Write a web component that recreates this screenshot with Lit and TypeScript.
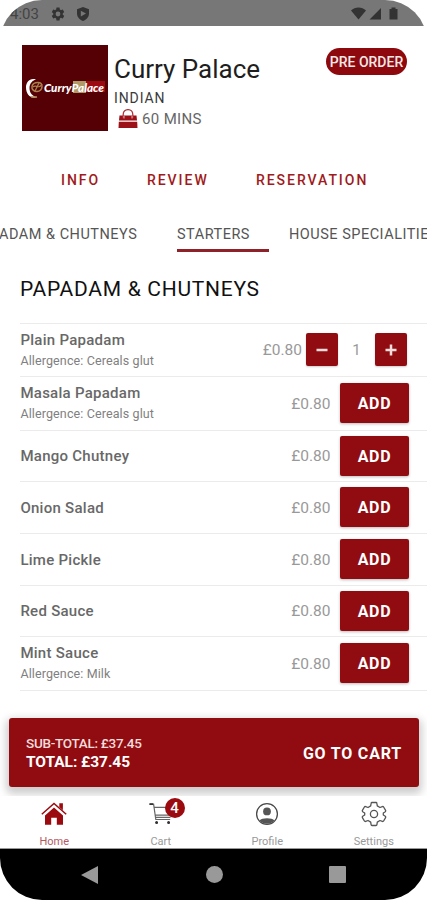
import { LitElement, html, svg, css, nothing } from "lit";
import { customElement, state } from "lit/decorators.js";
import { classMap } from "lit/directives/class-map.js";

interface Dish {
  name: string;
  note?: string;
  price: string;
  qty?: number;
  size: string;
}

const DISHES: Dish[] = [
  { name: "Plain Papadam", note: "Allergence: Cereals glut", price: "£0.80", qty: 1, size: "r53" },
  { name: "Masala Papadam", note: "Allergence: Cereals glut", price: "£0.80", size: "r54" },
  { name: "Mango Chutney", price: "£0.80", size: "r51" },
  { name: "Onion Salad", price: "£0.80", size: "r52" },
  { name: "Lime Pickle", price: "£0.80", size: "r52" },
  { name: "Red Sauce", price: "£0.80", size: "r51" },
  { name: "Mint Sauce", note: "Allergence: Milk", price: "£0.80", size: "r54" },
];

const GEAR =
  "M19.14 12.94c.04-.3.06-.61.06-.94 0-.32-.02-.64-.07-.94l2.03-1.58a.49.49 0 0 0 .12-.61l-1.92-3.32a.49.49 0 0 0-.59-.22l-2.39.96a7 7 0 0 0-1.62-.94l-.36-2.54a.48.48 0 0 0-.48-.41h-3.84a.48.48 0 0 0-.47.41l-.36 2.54c-.59.24-1.13.57-1.62.94l-2.39-.96a.48.48 0 0 0-.59.22L2.74 8.87a.48.48 0 0 0 .12.61l2.03 1.58c-.05.3-.09.63-.09.94s.02.64.07.94l-2.03 1.58a.49.49 0 0 0-.12.61l1.92 3.32c.12.22.37.29.59.22l2.39-.96c.5.38 1.03.7 1.62.94l.36 2.54c.05.24.24.41.48.41h3.84c.24 0 .44-.17.47-.41l.36-2.54a6.9 6.9 0 0 0 1.62-.94l2.39.96c.22.08.47 0 .59-.22l1.92-3.32a.48.48 0 0 0-.12-.61zM12 15.6A3.6 3.6 0 1 1 12 8.4a3.6 3.6 0 0 1 0 7.2z";

const NAV = [
  {
    label: "Home",
    icon: svg`<svg width="28" height="26" viewBox="0 0 28 26">
      <path d="M14 6.500 23 14.500v9.300h-6.200v-7h-5.600v7H5v-9.300z" fill="#9b0a0f"/>
      <path d="M1.800 13.200 14 2.500 26.200 13.200" fill="none" stroke="#9b0a0f" stroke-width="1.500"/>
      <path d="M19.300 2.200h3.600v7l-3.600-3.200z" fill="#9b0a0f"/>
    </svg>`,
  },
  {
    label: "Cart",
    icon: svg`<svg width="28" height="26" viewBox="0 0 28 26" fill="none" stroke="#666" stroke-width="1.2">
      <path d="M2.500 3.200h4.100l2.200 15.300h14.400M7.100 6.400h17v7.800H8.300M8.600 16.300H23.500"/>
      <path d="M2.500 3.200h3.600" stroke="#333" stroke-width="1.800"/>
      <circle cx="9.600" cy="21.600" r=".900" fill="#333" stroke="#333"/><circle cx="21.600" cy="21.600" r=".900" fill="#333" stroke="#333"/>
    </svg>`,
  },
  {
    label: "Profile",
    icon: svg`<svg width="28" height="26" viewBox="0 0 28 26">
      <circle cx="14" cy="13" r="10.400" fill="none" stroke="#4a4a4a" stroke-width="1.300"/>
      <circle cx="14" cy="10.400" r="3.900" fill="#555"/>
      <path d="M6.600 19.400c2-3 12.800-3 14.800 0A10 10 0 0 1 6.600 19.400z" fill="#555"/>
    </svg>`,
  },
  {
    label: "Settings",
    icon: svg`<svg width="28" height="26" viewBox="0 0 28 26" fill="none" stroke="#555" stroke-width="1.300" stroke-linejoin="round">
      <path d="M12 1.500h4q.8 0 .9.900l.4 2.500 2.700 1.600 2.300-.9q.9-.3 1.300.4l2 3.400q.4.700-.3 1.300L23.300 12v2l2 1.300q.7.600.3 1.300l-2 3.400q-.4.700-1.300.4l-2.300-.9-2.700 1.600-.4 2.500q-.1.900-.9.900h-4q-.8 0-.9-.9l-.4-2.500L8 19.500l-2.300.9q-.9.300-1.300-.4l-2-3.400q-.4-.7.300-1.300l2-1.300v-2l-2-1.300q-.7-.6-.3-1.300l2-3.400q.4-.7 1.300-.4l2.300.9 2.700-1.600.4-2.500q.1-.9.900-.9z"/>
      <circle cx="14" cy="13" r="3.600"/>
    </svg>`,
  },
];

@customElement("app-root")
class AppRoot extends LitElement {
  @state() private active = "Home";

  static styles = css`
    :host { display: block; width: 427px; height: 900px; background: #fff; font-family: Roboto, "Open Sans", sans-serif; color: #1e1e1e; }
    * { box-sizing: border-box; }
    svg { display: block; flex: none; }
    .phone { width: 427px; height: 900px; display: flex; flex-direction: column; border-radius: 42px; overflow: hidden; white-space: nowrap; }
    .status { height: 26px; flex: none; background: #777; display: flex; align-items: center; padding: 1px 28px 0 10px; color: #444; }
    .time { font-size: 15px; width: 40px; }
    .status .gap { flex: 1; }
    .status .s1 { margin-right: 10px; }
    .header { display: flex; height: 124px; padding: 19px 20px 0 22px; flex: none; }
    .logo { width: 86px; height: 86px; background: #550004; }
    .info { padding: 8px 0 0 6px; flex: 1; }
    .title { font-size: 26px; line-height: 32px; font-weight: 400; }
    .kind { font-size: 14px; line-height: 18px; margin-top: 4px; color: #3a3a3a; letter-spacing: .9px; }
    .mins { display: flex; align-items: center; font-size: 15px; line-height: 22px; color: #666; gap: 4px; padding-left: 4px; margin-top: 1px; letter-spacing: .35px; }
    .pre { height: 27px; width: 81px; margin-top: 3px; border-radius: 14px; background: #8d090e; color: #f7e8e8; font-size: 14px; line-height: 28px; text-align: center; font-weight: 500; }
    .links { display: flex; height: 58px; align-items: center; padding: 1px 0 0 61px; color: #a01a20; font-size: 14px; font-weight: 500; letter-spacing: 1.950px; flex: none; }
    .links .l1 { width: 86px; } .links .l2 { width: 109px; }
    .tabs { height: 48px; display: flex; flex: none; font-size: 14.500px; letter-spacing: .5px; color: #555; align-items: flex-start; overflow: hidden; }
    .tab { height: 44px; line-height: 53px; flex: none; }
    .t0 { width: 178px; margin-left: -1px; }
    .t1 { width: 92px; border-bottom: 3px solid #8f2228; margin-right: 20px; }
    .section { height: 67px; flex: none; padding-left: 20px; font-size: 21px; line-height: 67px; letter-spacing: .72px; color: #111; }
    .list { padding-left: 20px; flex: none; }
    .row { display: flex; align-items: center; border-top: 1px solid #ebebeb; }
    .row:last-child { border-bottom: 1px solid #ebebeb; height: 55px; }
    .r51 { height: 51px; } .r52 { height: 52px; } .r53 { height: 53px; } .r54 { height: 54px; }
    .words { flex: 1; padding-left: .4px; }
    .noted { padding-bottom: 1px; }
    .name { font-size: 15px; line-height: 20px; font-weight: 500; color: #686868; letter-spacing: .27px; }
    .note { font-size: 12.500px; line-height: 18px; margin-top: 2px; color: #808080; letter-spacing: .12px; }
    .price { font-size: 15.500px; color: #999; }
    .add { width: 69px; height: 40px; margin: -1px 18.500px 0 9px; background: #900c11; border-radius: 2px; color: #fff; font-size: 16px; font-weight: 700; letter-spacing: .7px; line-height: 41px; padding-left: 1px; text-align: center; box-shadow: 0 1px 3px #0004; }
    .step { width: 32px; height: 33px; background: #900c11; border-radius: 2px; display: grid; place-items: center; box-shadow: 0 1px 2px #0003; margin-top: -1px; }
    .minus { margin-left: 4px; }
    .plus { margin-right: 20px; }
    .qty { width: 37px; text-align: center; color: #999; font-size: 15px; }
    .spacer { height: 105px; flex: none; padding: 27px 8px 0 9px; }
    .cart { height: 69px; background: #900c11; border-radius: 3px; display: flex; align-items: center; justify-content: space-between; padding: 0 17px 0 17px; color: #fff; box-shadow: 0 4px 8px 3px #0003; }
    .sub { font-size: 13.500px; line-height: 19px; font-weight: 500; color: #f6dcdc; letter-spacing: -.28px; }
    .total { font-size: 15.500px; line-height: 19px; font-weight: 700; letter-spacing: -.05px; }
    .go { font-size: 16px; font-weight: 700; letter-spacing: .8px; padding-top: 1px; }
    .nav { height: 53px; flex: none; display: flex; position: relative; background: #fff; border-bottom: 1px solid #999; padding-left: 1px; }
    .item { flex: 1; display: flex; flex-direction: column; align-items: center; padding-top: 5px; font-size: 11px; color: #999; position: relative; }
    .item.on { color: #b35a64; }
    .lab { line-height: 13px; margin-top: 8px; }
    .badge { position: absolute; left: 57px; top: 2px; width: 20px; height: 20px; border-radius: 50%; background: #9b0a0f; color: #fff; font-size: 15px; line-height: 20px; font-weight: 500; text-align: center; }
    .sys { background: #000; flex: 1; display: flex; align-items: center; padding-left: 81px; }
    .back { margin-right: 107px; } .dot { margin-right: 106px; }
  `;

  private dish(d: Dish) {
    return html`<div class="row ${d.size}">
      <div class=${classMap({ words: true, noted: !!d.note })}>
        <div class="name">${d.name}</div>
        ${d.note ? html`<div class="note">${d.note}</div>` : nothing}
      </div>
      <div class="price">${d.price}</div>
      ${d.qty
        ? html`<div class="step minus"><svg width="12" height="12"><path d="M.5 6h11" stroke="#f4dcdc" stroke-width="2.500"/></svg></div>
            <div class="qty">${d.qty}</div>
            <div class="step plus"><svg width="12" height="12"><path d="M.5 6h11M6 .5v11" stroke="#f4dcdc" stroke-width="2.500"/></svg></div>`
        : html`<div class="add">ADD</div>`}
    </div>`;
  }

  render() {
    return html`<div class="phone">
      <div class="status">
        <span class="time">4:03</span>
        <svg class="s1" width="16" height="16" viewBox="0 0 24 24"><path d=${GEAR} fill="#333"/></svg>
        <svg width="14" height="16" viewBox="0 0 14 16"><path d="M7 1l6 2.200v4.300c0 3.500-2.500 6-6 7.500-3.500-1.500-6-4-6-7.500V3.200z" fill="#333"/><path d="M4.800 4.800 10 7.600l-5.200 2.900z" fill="#777"/></svg>
        <span class="gap"></span>
        <svg width="49" height="16" viewBox="0 0 49 16" fill="#333"><path d="M1 4.500c4-4 11-4 15 0L8.500 13.500zM19.500 13.500 31 2v11.500zM39.500 3h2V1.500h4V3h2v10.500h-8z"/></svg>
      </div>
      <div class="header">
        <svg class="logo" viewBox="0 0 86 86">
          <rect x="51" y="36" width="13" height="12" fill="#b09a68"/>
          <rect x="64" y="36" width="19" height="11" fill="#9d0910"/>
          <path d="M14 34.500C8 32.500 4 37 4 42.500c0 7 5 12 11.500 9.500-5-.3-8-4-8-9 0-4 2.500-7.500 6.500-8.500z" fill="#fff"/>
          <path d="M16 37.500c3 0 4 1.500 4 4s-2 5-5 5-5.500-2-5-5 3-4 6-4z" fill="none" stroke="#a8814d" stroke-width="1.500"/>
          <path d="M11 42c3-3 6 3 9-3M13 46l4-8M9 52h6" fill="none" stroke="#a8814d" stroke-width="1.300"/>
          <text x="22" y="46.500" font-size="10.500" font-family="Lato, sans-serif" font-weight="900" font-style="italic" fill="#fff" textLength="60" lengthAdjust="spacingAndGlyphs">CurryPalace</text>
        </svg>
        <div class="info">
          <div class="title">Curry Palace</div>
          <div class="kind">INDIAN</div>
          <div class="mins">
            <svg width="20" height="20" viewBox="0 0 20 20"><path d="M1.500 6.500h17l.5 5H1z" fill="#9b1117"/><path d="M.800 12.700h18.400l.3 6.300H.5z" fill="#9b1117"/><path d="M5.200 9V5.500C5.200-1 14.800-1 14.800 5.500V9" fill="none" stroke="#b0343a" stroke-width="1.300"/><path d="M6 6.800v2.700M14 6.800v2.700" stroke="#e5b5b7"/></svg>
            <span>60 MINS</span>
          </div>
        </div>
        <div class="pre">PRE ORDER</div>
      </div>
      <div class="links"><span class="l1">INFO</span><span class="l2">REVIEW</span><span>RESERVATION</span></div>
      <div class="tabs">
        <div class="tab t0">ADAM &amp; CHUTNEYS</div>
        <div class="tab t1">STARTERS</div>
        <div class="tab">HOUSE SPECIALITIES</div>
      </div>
      <div class="section">PAPADAM &amp; CHUTNEYS</div>
      <div class="list">${DISHES.map((d) => this.dish(d))}</div>
      <div class="spacer">
        <div class="cart">
          <div><div class="sub">SUB-TOTAL: £37.45</div><div class="total">TOTAL: £37.45</div></div>
          <div class="go">GO TO CART</div>
        </div>
      </div>
      <div class="nav">
        ${NAV.map(
          (n) => html`<div class=${classMap({ item: true, on: n.label === this.active })}>
            ${n.icon}<span class="lab">${n.label}</span>
            ${n.label === "Cart" ? html`<span class="badge">4</span>` : nothing}
          </div>`,
        )}
      </div>
      <div class="sys">
        <svg class="back" width="18" height="20"><path d="M0 10 17 1v18z" fill="#999"/></svg>
        <svg class="dot" width="17" height="17"><circle cx="8.500" cy="8.500" r="8.500" fill="#999"/></svg>
        <svg width="17" height="17"><rect width="17" height="17" rx="1" fill="#999"/></svg>
      </div>
    </div>`;
  }
}
